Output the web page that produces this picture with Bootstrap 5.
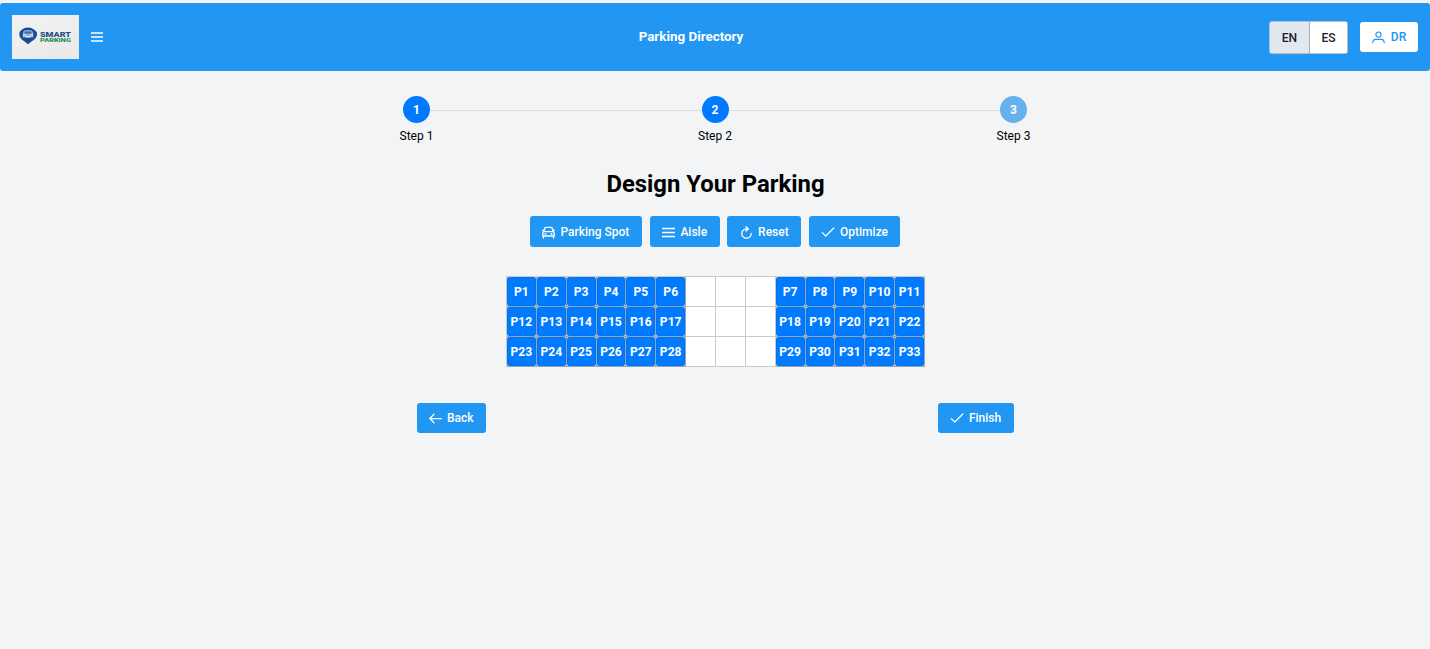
<!DOCTYPE html>
<html lang="en">
<head>
<meta charset="utf-8">
<meta name="viewport" content="width=device-width, initial-scale=1">
<title>Parking Directory</title>
<link href="https://cdn.jsdelivr.net/npm/bootstrap@5.3.0/dist/css/bootstrap.min.css" rel="stylesheet">
<style>
body{font-family:Roboto,sans-serif;font-size:12px;line-height:1.2;color:#000;background:#f3f4f6;min-height:100vh;overflow:hidden}
.topbar{height:68.4px;margin-top:3px;padding:0 12px;background:#2196f3;border-radius:3px;color:#fff;display:grid;grid-template-columns:149px 1fr 149px}
.brand-tile{width:67px;height:44.5px;background:linear-gradient(160deg,#f3f2f2,#e9e9e8)}
.brand-tile svg,.menu-icon,.btn svg{display:block;flex:none}
.menu-icon{margin-left:12px}
.page-title{font-size:13.4px;font-weight:700;text-align:center}
.lang{height:33px;width:79px;margin-right:12px;border:1px solid #b2bfce;border-radius:3px;overflow:hidden;background:#fff}
.lang .btn{border:0;border-radius:0;padding:1px 0 0;width:37px;font-size:12.1px;font-weight:500;color:#18212f;background:#fff}
.lang .btn.active{width:40px;background:#e2e8f0;color:#18212f;border-right:1px solid #a4b0be}
.btn-user{width:58px;height:29.5px;padding:0;background:#fff!important;color:#2196f3!important;border:0;border-radius:3px;font-size:12.1px;font-weight:500;gap:6px}
main{padding-left:1px}
.stepper{width:630px;margin:24.6px 1px 0 0}
.step{width:33px}
.step-dot{width:27px;height:27px;border-radius:50%;background:#007bff;color:#fff;font-size:12px;font-weight:700;padding-top:1px}
.step-dot.pending{background:#64b1ed}
.step-label{font-size:12px;margin-top:6px;white-space:nowrap;line-height:15px}
.step-line{height:1px;background:#d9dbdd;margin:14px -3px 0}
.headline{font-size:23.87px;font-weight:700;line-height:28px;margin:26px 0 0}
.tools{margin:18.4px 1px 0 0;gap:7.4px}
.btn-tool{height:30.5px;padding:1px 0 0;border:0;border-radius:3px;background:#2196f3!important;color:#fff!important;font-size:12px;font-weight:500;gap:5px}
.lot{width:419px;margin-top:29.5px;display:grid;grid-template-columns:repeat(14,1fr);border:1px solid #c9c9c9;border-width:1px 0 0 1px;background:#fff}
.bay{height:29.9px;border:1px solid #c9c9c9;border-width:0 1px 1px 0;background:#fff}
.bay.spot{background:#d7dbe0;border-color:#8fa6bd}
.bay.spot>span{display:flex;width:100%;height:100%;padding-top:.4px;align-items:center;justify-content:center;background:#007bff;border-radius:3px;box-shadow:inset 0 0 2px #0062cc;color:#fff;font-size:12.1px;font-weight:700}
.actions{width:597px;margin:35.7px 1px 0 0}
</style>
</head>
<body>
<svg class="d-none">
<symbol id="check" viewBox="0 0 14 14"><path d="M1.2 7.6 4.8 11 12.8 3" fill="none" stroke="currentColor" stroke-width="1.2" stroke-linecap="round" stroke-linejoin="round"/></symbol>
</svg>
<header class="topbar align-items-center">
  <div class="d-flex align-items-center">
    <div class="brand-tile">
      <svg width="67" height="45" viewBox="0 0 67 45" role="img">
        <path d="M16 29.2C12.8 26.2 7.3 24 7.3 19.2Q7.3 16.4 10 14.6Q12.5 12.5 16 12.5T22 14.6Q25 16.4 25 19.2C25 24 19.3 26.2 16 29.2Z" fill="#174c91"/>
        <path d="M12 15.6Q16 14.3 20 15.6L21.4 18.5V22.5H10.8V18.5Z" fill="#8fb0d6"/>
        <path d="M13 16.6H19L20 18.6H12Z" fill="#3d6ba6"/>
        <path d="M11.3 19.8H13.7M18.5 19.8H20.9M13.5 21.6H18.7" stroke="#f0f5fa" stroke-width="1.2"/>
        <text x="28" y="21.9" textLength="31" lengthAdjust="spacingAndGlyphs" font-size="7" font-weight="900" fill="#1f4f87">SMART</text>
        <text x="28" y="26.7" textLength="31" lengthAdjust="spacingAndGlyphs" font-size="5.2" font-weight="900" fill="#219353">PARKING</text>
      </svg>
    </div>
    <svg class="menu-icon" width="12" height="12" viewBox="0 0 12 12"><path d="M0 2H12M0 6H12M0 10H12" stroke="#fff" stroke-width="1.5"/></svg>
  </div>
  <div class="page-title pe-5">
    Parking Directory</div>
  <div class="d-flex align-items-center justify-content-end">
    <div class="lang d-flex flex-shrink-0">
      <button class="btn active">EN</button><button class="btn">ES</button>
    </div>
    <button class="btn btn-user d-flex flex-shrink-0 align-items-center justify-content-center">
      <svg width="13" height="13" viewBox="0 0 13 13" fill="none" stroke="currentColor" stroke-width="1.1" stroke-linecap="round"><circle cx="6.5" cy="3.6" r="2.6"/><path d="M.8 11.7Q.8 8.4 3.9 8.4H9.1Q12.2 8.4 12.2 11.7"/></svg>DR
    </button>
  </div>
</header>
<main class="d-flex flex-column align-items-center">
  <div class="stepper d-flex align-items-start">
    <div class="step d-flex flex-column align-items-center"><div class="step-dot d-flex align-items-center justify-content-center">1</div><div class="step-label">Step 1</div></div>
    <div class="step-line flex-fill"></div>
    <div class="step d-flex flex-column align-items-center"><div class="step-dot d-flex align-items-center justify-content-center">2</div><div class="step-label">Step 2</div></div>
    <div class="step-line flex-fill"></div>
    <div class="step d-flex flex-column align-items-center"><div class="step-dot pending d-flex align-items-center justify-content-center">3</div><div class="step-label">Step 3</div></div>
  </div>
  <h1 class="headline">Design Your Parking</h1>
  <div class="tools d-flex">
    <button class="btn btn-tool d-flex align-items-center justify-content-center" style="width:112.4px"><svg width="13" height="13" viewBox="0 0 13 13" fill="none" stroke="currentColor" stroke-width="1.3" stroke-linejoin="round" stroke-linecap="round"><path d="M1.8 5.7 2.9 2Q3.1 1.4 3.8 1.4H9.2Q9.9 1.4 10.1 2L11.2 5.7M.8 10V7Q.8 5.7 2 5.7H11Q12.2 5.7 12.2 7V10ZM1.4 10V12M11.6 10V12M3 8H4M10 8H9M.6 4.2H2M11 4.2H12.4"/></svg>Parking Spot</button>
    <button class="btn btn-tool d-flex align-items-center justify-content-center" style="width:70.5px"><svg width="13" height="13" viewBox="0 0 13 13"><path d="M.5 2.5H12.5M.5 6.5H12.5M.5 10.5H12.5" stroke="currentColor" stroke-width="1.3" stroke-linecap="round"/></svg>Aisle</button>
    <button class="btn btn-tool d-flex align-items-center justify-content-center" style="width:74px"><svg width="13" height="13" viewBox="0 0 13 13" fill="none" stroke="currentColor" stroke-width="1.3" stroke-linecap="round" stroke-linejoin="round"><path d="M6 .8 8.3 2.9 6 5M8.1 2.9H6.5A4.7 4.6 0 1 0 11.2 7.5"/></svg>Reset</button>
    <button class="btn btn-tool d-flex align-items-center justify-content-center" style="width:91.5px"><svg width="14" height="14"><use href="#check"/></svg>Optimize</button>
  </div>
  <div class="lot" id="lot"></div>
  <div class="actions d-flex justify-content-between">
    <button class="btn btn-tool d-flex align-items-center justify-content-center" style="width:69.5px"><svg width="13" height="13" viewBox="0 0 13 13"><path d="M12.3 6.5H.8M5 2.2.8 6.5 5 10.8" fill="none" stroke="currentColor" stroke-width="1.25" stroke-linecap="round" stroke-linejoin="round"/></svg>Back</button>
    <button class="btn btn-tool d-flex align-items-center justify-content-center" style="width:76px"><svg width="14" height="14"><use href="#check"/></svg>Finish</button>
  </div>
</main>
<script src="https://cdn.jsdelivr.net/npm/bootstrap@5.3.0/dist/js/bootstrap.bundle.min.js"></script>
<script>
let number = 1, bays = '';
for (let row = 0; row < 3; row++)
  for (let column = 0; column < 14; column++)
    bays += column > 5 && column < 9 ? '<div class="bay"></div>' : `<div class="bay spot"><span>P${number++}</span></div>`;
document.getElementById('lot').innerHTML = bays;
</script>
</body>
</html>
